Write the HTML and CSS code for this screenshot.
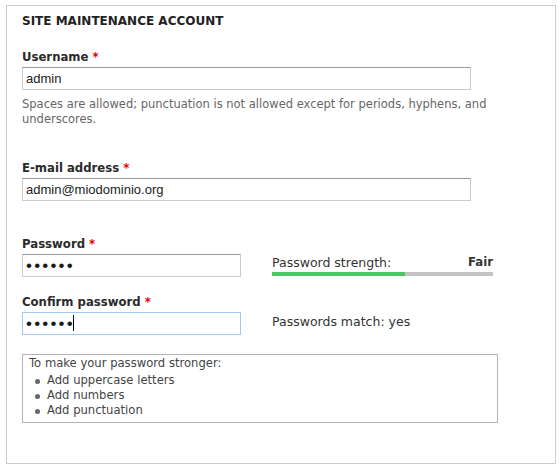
FILE: index.html
```html
<!DOCTYPE html>
<html>
<head>
<meta charset="utf-8">
<link rel="stylesheet" href="styles.css">
</head>
<body>
<div class="page">
  <div class="fieldset">
    <div class="legend">SITE MAINTENANCE ACCOUNT</div>

    <div class="field field-user">
      <label class="label" for="name">Username <span class="req">*</span></label>
      <input class="text long" id="name" type="text" value="admin">
      <div class="desc">Spaces are allowed; punctuation is not allowed except for periods, hyphens, and underscores.</div>
    </div>

    <div class="field field-mail">
      <label class="label" for="mail">E-mail address <span class="req">*</span></label>
      <input class="text long" id="mail" type="text" value="admin@miodominio.org">
    </div>

    <div class="pw-grid">
      <div class="field">
        <label class="label" for="pass1">Password <span class="req">*</span></label>
        <input class="text short pw" id="pass1" type="password" value="123456">
      </div>
      <div class="strength">
        <div class="strength-row">
          <span>Password strength:</span>
          <span class="strength-val">Fair</span>
        </div>
        <div class="bar"><div class="bar-fill" style="width:60%"></div></div>
      </div>

      <div class="field field-confirm">
        <label class="label" for="pass2">Confirm password <span class="req">*</span></label>
        <div class="input-wrap">
          <input class="text short pw focus" id="pass2" type="password" value="123456">
          <span class="caret"></span>
        </div>
      </div>
      <div class="match">Passwords match: yes</div>
    </div>

    <div class="suggest">
      <p class="suggest-title">To make your password stronger:</p>
      <ul class="suggest-list">
        <li>Add uppercase letters</li>
        <li>Add numbers</li>
        <li>Add punctuation</li>
      </ul>
    </div>
  </div>
</div>
</body>
</html>
```

FILE: styles.css
```css
html, body {
  margin: 0;
  padding: 0;
  background: #fff;
}

body {
  font-family: "DejaVu Sans", Verdana, sans-serif;
  color: #333;
}

.page {
  padding: 5px 0 0 6px;
}

.fieldset {
  width: 550px;
  box-sizing: border-box;
  border: 1px solid #cccccc;
  padding: 8px 15px 40px 15px;
}

.legend {
  font-size: 12px;
  font-weight: bold;
  line-height: 15px;
  color: #222;
}

.field {
  display: flex;
  flex-direction: column;
  align-items: flex-start;
}

.field-user {
  margin-top: 21px;
}

.field-mail {
  margin-top: 34px;
}

.label {
  font-size: 11.7px;
  font-weight: bold;
  line-height: 15px;
  color: #2b2b2b;
  margin-bottom: 2px;
}

.req {
  color: #e00000;
}

.text {
  box-sizing: border-box;
  height: 23px;
  margin: 0;
  padding: 0 3px;
  border: 1px solid #cccccc;
  border-top-color: #999999;
  font-family: "Liberation Sans", Arial, sans-serif;
  font-size: 13px;
  color: #222;
  background: #fff;
  outline: none;
}

.long {
  width: 449px;
}

.short {
  width: 219px;
}

.pw {
  font-size: 17px;
  letter-spacing: 2.2px;
  color: #1a1a1a;
}

.focus {
  border-color: #a4c8ee;
}

.desc {
  margin-top: 7px;
  max-width: 475px;
  font-size: 11.5px;
  line-height: 15px;
  color: #666;
}

.pw-grid {
  margin-top: 36px;
  display: grid;
  grid-template-columns: 219px 221px;
  column-gap: 31px;
}

.field-confirm {
  margin-top: 18px;
}

.input-wrap {
  position: relative;
}

.caret {
  position: absolute;
  left: 51px;
  top: 3px;
  width: 1px;
  height: 16px;
  background: #000;
}

.strength {
  align-self: end;
  padding-bottom: 1px;
}

.strength-row {
  display: flex;
  justify-content: space-between;
  font-size: 12.5px;
  line-height: 15px;
  color: #333;
}

.strength-val {
  font-size: 11.7px;
  font-weight: bold;
}

.bar {
  margin-top: 2px;
  height: 4px;
  background: #c3c3c3;
}

.bar-fill {
  height: 4px;
  background: #4bc763;
}

.match {
  align-self: end;
  padding-bottom: 6px;
  font-size: 12.5px;
  line-height: 15px;
  color: #333;
}

.suggest {
  margin-top: 19px;
  width: 476px;
  box-sizing: border-box;
  border: 1px solid #b4b4b4;
  padding: 1px 6px 4px 6px;
  font-size: 11.6px;
  line-height: 15px;
  color: #444;
}

.suggest-title {
  margin: 0;
}

.suggest-list {
  list-style: none;
  margin: 2px 0 0 0;
  padding: 0;
}

.suggest-list li {
  display: flex;
  align-items: center;
  padding-left: 6px;
}

.suggest-list li::before {
  content: "";
  width: 5px;
  height: 5px;
  border-radius: 50%;
  background: #666;
  margin-right: 7px;
  margin-top: 1px;
}
```
